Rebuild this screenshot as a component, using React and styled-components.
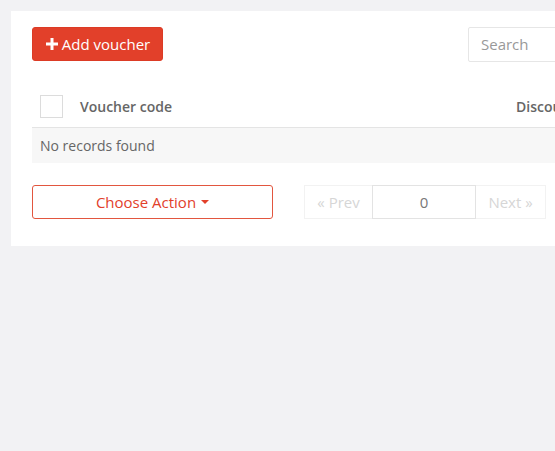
import React from "react";
import styled, { createGlobalStyle } from "styled-components";

const Global = createGlobalStyle`
  html, body { margin: 0; padding: 0; background: #f2f2f4; overflow: hidden; }
  body { font-family: "Open Sans", "Liberation Sans", sans-serif; color: #555; }
  * { box-sizing: border-box; }
`;

const Page = styled.div`
  padding: 11px 0 0 11px;
  width: 1000px;
`;

const Card = styled.div`
  background: #fff;
  width: 900px;
  padding: 16px 21px 27px 21px;
`;

const Toolbar = styled.div`
  display: flex;
  align-items: center;
  height: 34px;
`;

const PrimaryButton = styled.button`
  display: flex;
  align-items: center;
  justify-content: center;
  gap: 4px;
  flex-shrink: 0;
  width: 131px;
  height: 34px;
  padding: 0 0 0 1px;
  white-space: nowrap;
  background: #e2402a;
  border: 1px solid #dc3b25;
  border-radius: 3px;
  color: #fff;
  font-family: inherit;
  font-size: 15px;
`;

const SearchInput = styled.input`
  height: 35px;
  width: 340px;
  flex-shrink: 0;
  margin-left: 305px;
  border: 1px solid #e6e6e6;
  border-radius: 2px;
  padding: 0 12px;
  font-family: inherit;
  font-size: 15px;
  color: #555;
  &::placeholder { color: #999; }
`;

const Table = styled.div`
  margin-top: 35px;
`;

const HeadRow = styled.div`
  display: grid;
  grid-template-columns: 40px 436px 1fr;
  align-items: center;
  height: 32px;
  padding-left: 8px;
  border-bottom: 1px solid #e4e4e4;
  padding-bottom: 2px;
`;

const Check = styled.span`
  display: block;
  width: 23px;
  height: 23px;
  border: 1px solid #dcdcdc;
  background: #fff;
  margin-top: -8px;
`;

const HeadCell = styled.div`
  font-weight: 600;
  font-size: 14px;
  color: #666;
  margin-top: -8px;
  white-space: nowrap;
`;

const EmptyRow = styled.div`
  height: 35px;
  background: #f7f7f7;
  display: flex;
  align-items: center;
  padding-left: 8px;
  font-size: 14px;
  color: #666;
`;

const Footer = styled.div`
  display: flex;
  align-items: center;
  margin-top: 22px;
  gap: 31px;
`;

const OutlineButton = styled.button`
  width: 241px;
  height: 34px;
  background: #fff;
  border: 1px solid #e2563f;
  border-radius: 3px;
  color: #e2402a;
  font-family: inherit;
  font-size: 15px;
  display: flex;
  align-items: center;
  justify-content: center;
  gap: 5px;
  padding: 0 0 1px 0;
`;

const Caret = styled.span`
  width: 0;
  height: 0;
  border-left: 4px solid transparent;
  border-right: 4px solid transparent;
  border-top: 4px solid #e2402a;
  margin-top: 1px;
`;

const Pager = styled.div`
  display: flex;
  height: 34px;
`;

const PageItem = styled.div`
  width: ${(p) => p.$w}px;
  height: 34px;
  display: flex;
  align-items: center;
  justify-content: center;
  padding-bottom: 1px;
  border: 1px solid ${(p) => (p.$active ? "#e3e3e3" : "#f2f2f2")};
  margin-left: ${(p) => (p.$first ? 0 : -1)}px;
  color: ${(p) => (p.$active ? "#777" : "#d6d6d6")};
  font-size: 15px;
  background: #fff;
  position: relative;
  z-index: ${(p) => (p.$active ? 1 : 0)};
`;

export default function App() {
  return (
    <>
      <Global />
      <Page>
        <Card>
          <Toolbar>
            <PrimaryButton>
              <svg width="12" height="12" viewBox="0 0 12 12">
                <path d="M4.5 0h3v4.5H12v3H7.5V12h-3V7.5H0v-3h4.5z" fill="#fff" />
              </svg>
              Add voucher
            </PrimaryButton>
            <SearchInput placeholder="Search" />
          </Toolbar>
          <Table>
            <HeadRow>
              <Check />
              <HeadCell>Voucher code</HeadCell>
              <HeadCell>Discount</HeadCell>
            </HeadRow>
            <EmptyRow>No records found</EmptyRow>
          </Table>
          <Footer>
            <OutlineButton>
              Choose Action <Caret />
            </OutlineButton>
            <Pager>
              <PageItem $w={69} $first>« Prev</PageItem>
              <PageItem $w={104} $active>0</PageItem>
              <PageItem $w={71}>Next »</PageItem>
            </Pager>
          </Footer>
        </Card>
      </Page>
    </>
  );
}
